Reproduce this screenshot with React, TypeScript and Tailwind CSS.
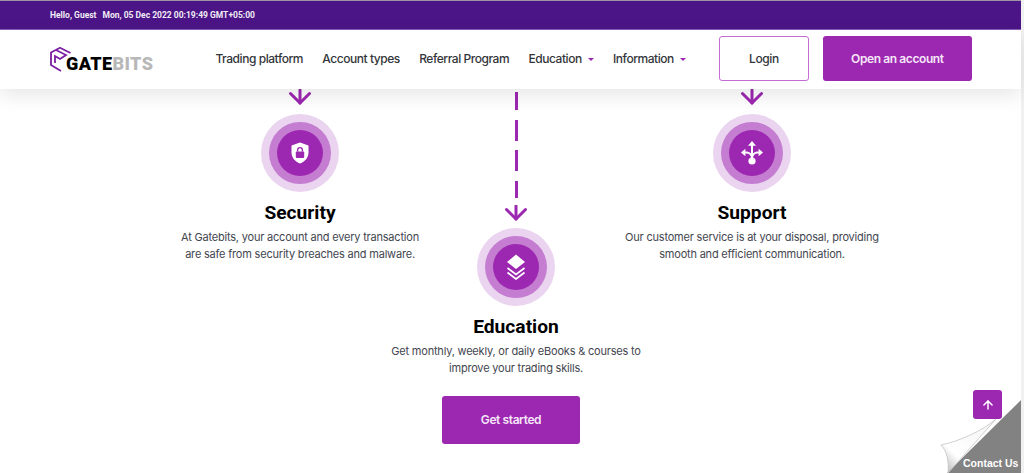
import { ArrowUp } from "lucide-react";

const body = "font-['Inter','Noto_Sans',sans-serif]";

function DownArrow() {
  return (
    <svg width="24" height="16" viewBox="0 0 24 16" fill="none" stroke="#9c27b0" strokeWidth="3" strokeLinecap="round" strokeLinejoin="round">
      <path d="M12 1v13" />
      <path d="M2.5 4.5L12 14l9.5-9.5" />
    </svg>
  );
}

function ShieldIcon() {
  return (
    <svg width="18" height="22" viewBox="0 0 18 22">
      <path d="M9 0.5L17.5 3.5V10.5C17.5 15.5 14 19.5 9 21.5C4 19.5 0.5 15.5 0.5 10.5V3.5Z" fill="#fff" />
      <rect x="4.8" y="9.4" width="8.4" height="6.6" rx="1" fill="#9c27b0" />
      <path d="M6.6 9.6V8a2.4 2.4 0 0 1 4.8 0v1.6" fill="none" stroke="#9c27b0" strokeWidth="1.4" />
    </svg>
  );
}

function LayersIcon() {
  return (
    <svg width="20" height="26" viewBox="0 0 20 26">
      <path d="M10 0.5L19 8L10 15L1 8Z" fill="#fff" />
      <path d="M1.5 14L10 20.5L18.5 14" fill="none" stroke="#fff" strokeWidth="1.7" />
      <path d="M1.5 18.5L10 25L18.5 18.5" fill="none" stroke="#fff" strokeWidth="1.7" />
    </svg>
  );
}

function RoutesIcon() {
  return (
    <svg width="22" height="24" viewBox="0 0 22 24" fill="none" stroke="#fff" strokeWidth="2">
      <path d="M11 3v16" />
      <path d="M2 11.5h3.5c3 0 5.5 2.5 5.5 5.5M20 11.5h-3.5c-3 0-5.5 2.5-5.5 5.5" />
      <path d="M11 0L15 4.8H7Z" fill="#fff" stroke="none" />
      <path d="M0 11.5L4.4 7.8V15.2Z" fill="#fff" stroke="none" />
      <path d="M22 11.5L17.6 7.8V15.2Z" fill="#fff" stroke="none" />
      <circle cx="11" cy="20" r="3.6" fill="#fff" stroke="none" />
    </svg>
  );
}

function Rings({ children }: { children: React.ReactNode }) {
  return (
    <div className="flex h-[78px] w-[78px] items-center justify-center rounded-full bg-[#ebd4f0]">
      <div className="flex h-[62px] w-[62px] items-center justify-center rounded-full bg-[#c47dd1]">
        <div className="flex h-[46px] w-[46px] items-center justify-center rounded-full bg-[#9c27b0]">{children}</div>
      </div>
    </div>
  );
}

function Feature({ icon, title, lines }: { icon: React.ReactNode; title: string; lines: string[] }) {
  return (
    <div className="flex flex-col items-center">
      <Rings>{icon}</Rings>
      <h3 className="mt-[6px] whitespace-nowrap font-['Roboto',sans-serif] text-[19.2px] leading-[30px] font-bold text-black">{title}</h3>
      <div className={`mt-[1px] flex flex-col items-center text-[11px] leading-[17px] tracking-[-0.2px] text-[#43464f] ${body}`}>
        {lines.map((l) => (
          <p key={l} className="whitespace-nowrap">{l}</p>
        ))}
      </div>
    </div>
  );
}

function Caret() {
  return <span className="ml-[6px] mt-[1px] h-0 w-0 border-x-[3px] border-t-[3px] border-x-transparent border-t-[#9c27b0]" />;
}

function Logo() {
  return (
    <div className="flex items-end">
      <svg width="21" height="25" viewBox="0 0 21 25" fill="none" stroke="#7b1fa2" strokeWidth="1.8">
        <path d="M20.5 6L10 0.8L1 5.5V18L11 24" />
        <path d="M6 3L16 8L10 12L5 9V16" />
      </svg>
      <span className="ml-[-5px] mb-[-1px] font-['Roboto',sans-serif] text-[18px] leading-[19px] font-black tracking-[0.4px] text-black">
        GATE<span className="text-[#b8b8b8]">BITS</span>
      </span>
    </div>
  );
}

export default function App() {
  const navLink = `text-[12px] font-medium tracking-[-0.45px] text-[#33353a] whitespace-nowrap ${body}`;
  const cta = `flex shrink-0 items-center justify-center rounded-[3px] bg-[#9c27b0] text-[12px] font-semibold tracking-[-0.4px] text-[#f5e6f8] ${body}`;
  return (
    <div className="relative h-[473px] w-[1024px] overflow-hidden bg-white">
      <div className="absolute inset-y-0 right-0 w-[3px] bg-[#f1f1f1]" />
      <div className="relative z-10 pr-[3px]">
        <div className="flex h-[30px] items-center border-y border-t-[#9b93a6] border-b-[#8a5cb5] bg-[#4b1587] pl-[50px] font-['Roboto',sans-serif] text-[8.5px] font-bold text-[#f1ecf6]">
          <span>Hello, Guest</span>
          <span className="ml-[6px]">Mon, 05 Dec 2022 00:19:49 GMT+05:00</span>
        </div>
        <header className="flex h-[59px] items-center bg-white pb-[2px] pl-[50px] shadow-[0_6px_20px_rgba(0,0,0,0.1)]">
          <div className="translate-y-[1px]">
            <Logo />
          </div>
          <nav className="ml-[62px] flex items-center gap-[19.3px]">
            <a className={navLink}>Trading platform</a>
            <a className={navLink}>Account types</a>
            <a className={navLink}>Referral Program</a>
            <a className={`${navLink} flex items-center`}>Education<Caret /></a>
            <a className={`${navLink} flex items-center`}>Information<Caret /></a>
          </nav>
          <a className={`ml-[33px] flex h-[45px] w-[90px] items-center justify-center rounded-[3px] border border-[#c56bd4] text-[12px] font-medium tracking-[-0.4px] text-[#33353a] ${body}`}>Login</a>
          <a className={`ml-[14px] h-[45px] w-[149px] ${cta}`}>Open an account</a>
        </header>
      </div>

      <main className="relative grid grid-cols-[260px_172px_300px] pl-[170px]">
        <div className="flex flex-col items-center">
          <DownArrow />
          <div className="mt-[9px]">
            <Feature icon={<ShieldIcon />} title="Security" lines={["At Gatebits, your account and every transaction", "are safe from security breaches and malware."]} />
          </div>
        </div>

        <div className="flex flex-col items-center">
          <div className="mt-[3px] h-[106px] border-l-[3px] border-dashed border-[#9c27b0] [border-image:repeating-linear-gradient(to_bottom,#9c27b0_0,#9c27b0_20px,transparent_20px,transparent_29px)_3]" />
          <div className="mt-[7px]">
            <DownArrow />
          </div>
          <div className="mt-[7px]">
            <Feature icon={<LayersIcon />} title="Education" lines={["Get monthly, weekly, or daily eBooks & courses to", "improve your trading skills."]} />
          </div>
          <a className={`mt-[19px] mr-[10px] h-[48px] w-[138px] ${cta}`}>Get started</a>
        </div>

        <div className="flex flex-col items-center">
          <DownArrow />
          <div className="mt-[9px]">
            <Feature icon={<RoutesIcon />} title="Support" lines={["Our customer service is at your disposal, providing", "smooth and efficient communication."]} />
          </div>
        </div>
      </main>

      {/* scroll to top */}
      <button className="absolute left-[973px] top-[390px] flex h-[29px] w-[29px] items-center justify-center rounded-[3px] bg-[#9c27b0] text-white">
        <ArrowUp size={14} strokeWidth={2.5} />
      </button>

      {/* page curl */}
      <svg className="absolute bottom-0 right-0" width="84" height="74" viewBox="0 0 84 74">
        <defs>
          <linearGradient id="fold" x1="0" y1="1" x2="1" y2="0">
            <stop offset="0" stopColor="#a8a8a8" />
            <stop offset="0.3" stopColor="#ffffff" />
            <stop offset="1" stopColor="#f4f4f4" />
          </linearGradient>
        </defs>
        <path d="M7 74L81 1V74Z" fill="#828282" />
        <path d="M1 46C20 42 42 32 56 20L8 74C9 62 7 52 1 46Z" fill="url(#fold)" stroke="#c4c4c4" strokeWidth="0.8" />
      </svg>
      <span className="absolute left-[963px] top-[456px] font-['Liberation_Sans',sans-serif] text-[10.5px] font-bold text-white">Contact Us</span>
    </div>
  );
}
